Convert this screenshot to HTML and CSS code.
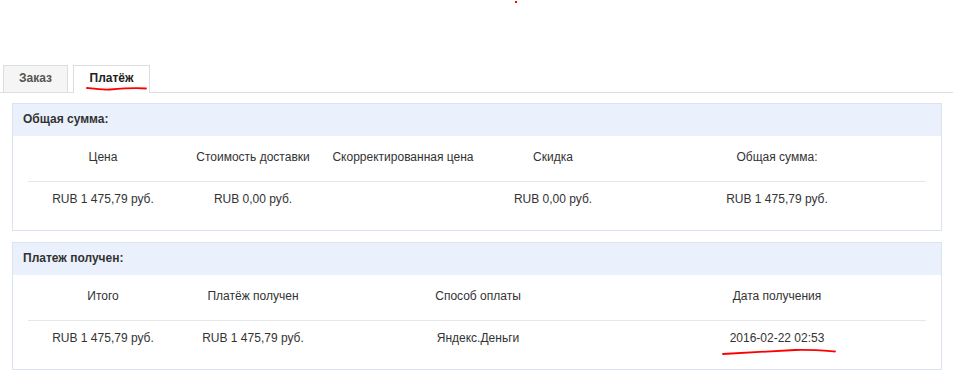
FILE: index.html
```html
<!DOCTYPE html>
<html lang="ru">
<head>
<meta charset="utf-8">
<title>Платёж</title>
<link rel="stylesheet" href="styles.css">
</head>
<body>
<div class="page">
  <div class="tabs">
    <div class="tab">Заказ</div>
    <div class="tab active">Платёж</div>
  </div>

  <div class="panels">
    <section class="panel">
      <div class="panel-head">Общая сумма:</div>
      <table class="grid">
        <colgroup><col class="c150"><col class="c150"><col class="c150"><col class="c150"><col></colgroup>
        <thead>
          <tr><th>Цена</th><th>Стоимость доставки</th><th>Скорректированная цена</th><th>Скидка</th><th>Общая сумма:</th></tr>
        </thead>
        <tbody>
          <tr><td>RUB 1 475,79 руб.</td><td>RUB 0,00 руб.</td><td></td><td>RUB 0,00 руб.</td><td>RUB 1 475,79 руб.</td></tr>
        </tbody>
      </table>
    </section>

    <section class="panel">
      <div class="panel-head">Платеж получен:</div>
      <table class="grid">
        <colgroup><col class="c150"><col class="c150"><col class="c300"><col></colgroup>
        <thead>
          <tr><th>Итого</th><th>Платёж получен</th><th>Способ оплаты</th><th>Дата получения</th></tr>
        </thead>
        <tbody>
          <tr><td>RUB 1 475,79 руб.</td><td>RUB 1 475,79 руб.</td><td>Яндекс.Деньги</td><td>2016-02-22 02:53</td></tr>
        </tbody>
      </table>
    </section>
  </div>

  <svg class="marks" width="953" height="388" viewBox="0 0 953 388" aria-hidden="true">
    <rect x="515" y="1" width="2" height="2" fill="#ff0000"/>
    <path d="M87 88 C 95 89, 102 90, 110 89.5 C 122 88.5, 134 87.5, 146 88.5" fill="none" stroke="#f00" stroke-width="1.8" stroke-linecap="round"/>
    <path d="M723 354 C 745 353, 770 351.5, 795 350 C 810 349.5, 822 350.5, 835 351.5" fill="none" stroke="#f00" stroke-width="1.8" stroke-linecap="round"/>
  </svg>
</div>
</body>
</html>
```

FILE: styles.css
```css
* { box-sizing: border-box; }

html, body {
  margin: 0;
  padding: 0;
  background: #fff;
}

.page {
  position: relative;
  width: 953px;
  height: 388px;
  overflow: hidden;
  font-family: "Liberation Sans", Arial, sans-serif;
  font-size: 12px;
  color: #333;
}

.tabs {
  display: flex;
  gap: 5px;
  padding: 65px 0 0 3px;
  border-bottom: 1px solid #dddddd;
  height: 93px;
}

.tab {
  height: 27px;
  padding: 0 15px;
  line-height: 25px;
  font-weight: bold;
  color: #555;
  background: #f5f5f5;
  border: 1px solid #dddddd;
  border-bottom: none;
}

.tab:first-child {
  width: 65px;
  text-align: center;
  padding: 0;
}

.tab.active {
  width: 77px;
  height: 28px;
  padding: 0;
  text-align: center;
  color: #222;
  background: #fff;
  margin-bottom: -1px;
}

.panels {
  display: flex;
  flex-direction: column;
  gap: 11px;
  padding: 10px 11px 0 12px;
}

.panel {
  border: 1px solid #dae4f1;
  background: #fff;
}

.panel-head {
  height: 32px;
  line-height: 31px;
  padding-left: 10px;
  background: #eaf1fc;
  font-weight: bold;
  color: #333;
}

.grid {
  width: 898px;
  margin: 0 15px;
  border-collapse: collapse;
  table-layout: fixed;
}

.c150 { width: 150px; }
.c300 { width: 300px; }

.grid th {
  font-weight: normal;
  text-align: center;
  line-height: 14px;
  padding: 14px 0 17px;
  border-bottom: 1px solid #e3e6ea;
  white-space: nowrap;
}

.grid td {
  text-align: center;
  line-height: 14px;
  padding: 10px 0 24px;
  white-space: nowrap;
}

.marks {
  position: absolute;
  top: 0;
  left: 0;
  pointer-events: none;
}
```
